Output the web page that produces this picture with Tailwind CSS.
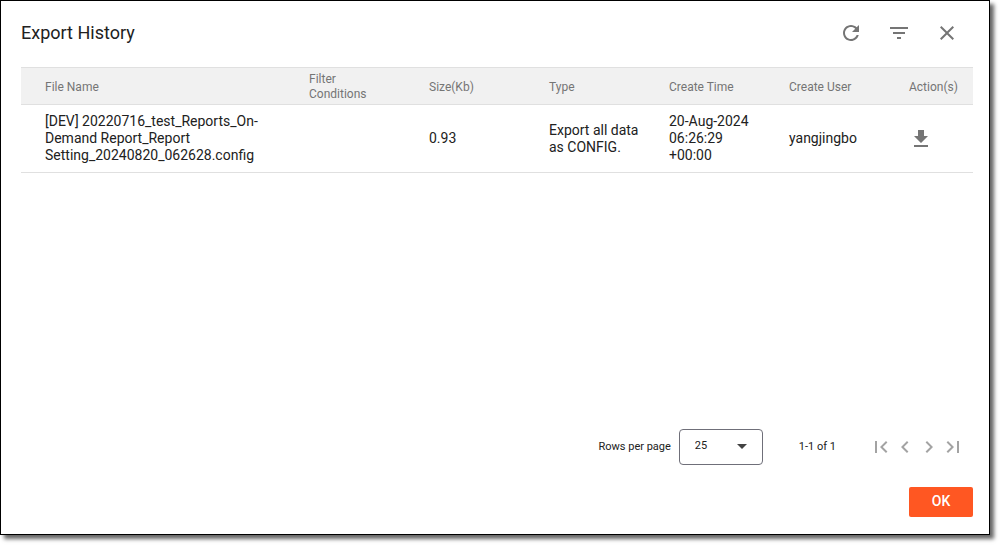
<!DOCTYPE html>
<html lang="en">
<head>
    <meta charset="UTF-8">
    <meta name="viewport" content="width=device-width, initial-scale=1.0">
    <title>Export History</title>
    <!-- Tailwind CSS for styling -->
    <script src="https://cdn.jsdelivr.net/npm/@tailwindcss/browser@4"></script>
</head>
<body class="bg-white font-['Roboto',sans-serif] text-[#212121] min-h-screen flex pr-3 pb-3">

    <div role="dialog" aria-labelledby="dialog-title" class="flex-1 min-w-0 flex flex-col bg-white border border-black pl-5 pr-4 pb-[17px] shadow-[4px_4px_4px_0px_rgba(0,0,0,0.6)]">
        <!-- Title bar -->
        <header class="h-16 mb-0.5 flex items-center justify-between">
            <h1 id="dialog-title" class="text-lg">Export History</h1>
            <div class="flex gap-6 pr-3.5 text-[#757575]">
                <button type="button" aria-label="Refresh" class="size-6">
                    <svg class="size-6" viewBox="0 0 24 24" fill="currentColor"><path d="M17.65 6.35C16.2 4.9 14.21 4 12 4c-4.42 0-7.99 3.58-7.99 8s3.57 8 7.99 8c3.73 0 6.84-2.55 7.73-6h-2.08c-.82 2.33-3.04 4-5.65 4-3.31 0-6-2.69-6-6s2.69-6 6-6c1.66 0 3.14.69 4.22 1.78L13 11h7V4l-2.35 2.35z"/></svg>
                </button>
                <button type="button" aria-label="Filter" class="size-6">
                    <svg class="size-6" viewBox="0 0 24 24" fill="currentColor"><path d="M10 18h4v-2h-4v2zM3 6v2h18V6H3zm3 7h12v-2H6v2z"/></svg>
                </button>
                <button type="button" aria-label="Close" class="size-6">
                    <svg class="size-6" viewBox="0 0 24 24" fill="currentColor"><path d="M19 6.41L17.59 5 12 10.59 6.41 5 5 6.41 10.59 12 5 17.59 6.41 19 12 13.41 17.59 19 19 17.59 13.41 12z"/></svg>
                </button>
            </div>
        </header>

        <!-- Export list -->
        <main class="flex-1">
            <table class="w-full table-fixed border-collapse text-left">
                <thead>
                    <tr class="h-[37px] bg-[#f1f1f1] border-y border-[#e0e0e0] text-xs leading-[15px] text-[#757575]">
                        <th class="w-[264px] pl-6 pr-4 pt-0.5 font-normal">File Name</th>
                        <th class="w-[120px] pl-6 pr-4 pt-0.5 font-normal">Filter Conditions</th>
                        <th class="w-[120px] pl-6 pt-0.5 font-normal">Size(Kb)</th>
                        <th class="w-[120px] pl-6 pt-0.5 font-normal">Type</th>
                        <th class="w-[120px] pl-6 pt-0.5 font-normal">Create Time</th>
                        <th class="w-[120px] pl-6 pt-0.5 font-normal">Create User</th>
                        <th class="pl-6 pt-0.5 font-normal">Action(s)</th>
                    </tr>
                </thead>
                <tbody>
                    <tr class="h-[68px] border-b border-[#e0e0e0] text-sm leading-[17px]">
                        <td class="pl-6 pr-4 py-2">[DEV] 20220716_test_Reports_On-Demand Report_Report Setting_20240820_062628.config</td>
                        <td class="pl-6"></td>
                        <td class="pl-6">0.93</td>
                        <td class="pl-6">Export all data as CONFIG.</td>
                        <td class="pl-6">20-Aug-2024 06:26:29 +00:00</td>
                        <td class="pl-6">yangjingbo</td>
                        <td class="pl-6">
                            <button type="button" aria-label="Download" class="block size-6 text-[#757575]">
                                <svg class="size-6" viewBox="0 0 24 24" fill="currentColor"><path d="M19 9h-4V3H9v6H5l7 7 7-7zM5 18v2h14v-2H5z"/></svg>
                            </button>
                        </td>
                    </tr>
                </tbody>
            </table>
        </main>

        <!-- Pagination -->
        <div class="flex items-center justify-end pr-2 text-[11px]">
            <label for="rows" class="mr-2">Rows per page</label>
            <div class="relative mr-9">
                <select id="rows" class="block appearance-none w-[84px] h-9 pl-[15px] pb-0.5 border border-[#6f6f79] rounded bg-white">
                    <option>10</option>
                    <option selected>25</option>
                    <option>50</option>
                </select>
                <svg class="absolute right-[9px] top-[5px] size-6 text-[#424242] pointer-events-none" viewBox="0 0 24 24" fill="currentColor"><path d="M7 10l5 5 5-5z"/></svg>
            </div>
            <span class="mr-[33px]">1-1 of 1</span>
            <div class="flex text-[#a3a3a3]">
                <button type="button" aria-label="First page" disabled>
                    <svg class="size-6" viewBox="0 0 24 24" fill="currentColor"><path d="M18.41 16.59L13.82 12l4.59-4.59L17 6l-6 6 6 6zM6 6h2v12H6z"/></svg>
                </button>
                <button type="button" aria-label="Previous page" disabled>
                    <svg class="size-6" viewBox="0 0 24 24" fill="currentColor"><path d="M15.41 7.41L14 6l-6 6 6 6 1.41-1.41L10.83 12z"/></svg>
                </button>
                <button type="button" aria-label="Next page" disabled>
                    <svg class="size-6" viewBox="0 0 24 24" fill="currentColor"><path d="M10 6L8.59 7.41 13.17 12l-4.58 4.59L10 18l6-6z"/></svg>
                </button>
                <button type="button" aria-label="Last page" disabled>
                    <svg class="size-6" viewBox="0 0 24 24" fill="currentColor"><path d="M5.59 7.41L10.18 12l-4.59 4.59L7 18l6-6-6-6zM16 6h2v12h-2z"/></svg>
                </button>
            </div>
        </div>

        <footer class="flex justify-end mt-[22px]">
            <button type="button" class="w-16 h-[30px] pb-0.5 rounded-xs bg-[#ff5722] text-white text-sm font-medium">OK</button>
        </footer>
    </div>

</body>
</html>
